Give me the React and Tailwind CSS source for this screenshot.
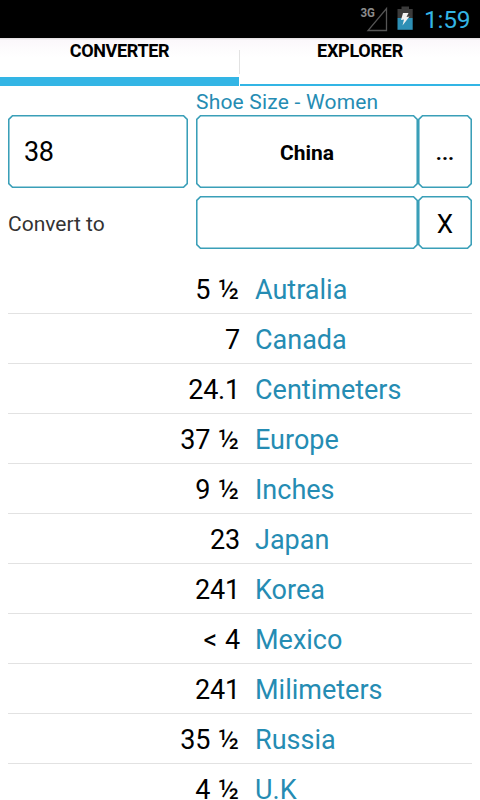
const SIZES = [
  { value: "5 ½", name: "Autralia" },
  { value: "7", name: "Canada" },
  { value: "24.1", name: "Centimeters" },
  { value: "37 ½", name: "Europe" },
  { value: "9 ½", name: "Inches" },
  { value: "23", name: "Japan" },
  { value: "241", name: "Korea" },
  { value: "< 4", name: "Mexico" },
  { value: "241", name: "Milimeters" },
  { value: "35 ½", name: "Russia" },
  { value: "4 ½", name: "U.K" },
];

// Outline with bevelled corners, drawn behind a field or button.
function Frame({ w, h }) {
  const a = 0.75;
  const c = 4.5;
  const points = `${c},${a} ${w - c},${a} ${w - a},${c} ${w - a},${h - c} ${w - c},${h - a} ${c},${h - a} ${a},${h - c} ${a},${c}`;
  return (
    <svg className="pointer-events-none absolute inset-0" width={w} height={h} aria-hidden="true">
      <polygon points={points} fill="none" stroke="#3a9fb8" strokeWidth="1.6" />
    </svg>
  );
}

function StatusBar() {
  return (
    <div className="flex h-[38px] shrink-0 items-start bg-black pl-[360px]">
      <svg width="60" height="38" viewBox="0 0 60 38" aria-hidden="true">
        <path d="M8 30.500 L26.500 30.500 L26.500 8.500 Z" fill="none" stroke="#555" strokeWidth="1.3" />
        <text x="0.5" y="17" fontSize="13" fontWeight="700" fill="#8c8c8c" fontFamily="Roboto, sans-serif" textLength="14.5" lengthAdjust="spacingAndGlyphs">3G</text>
        <path d="M41.500 6.500 H49 V9 H52.700 V18 H37.500 V9 H41.500 Z" fill="#3b3b3b" />
        <path d="M37.500 18 H52.700 V29.800 H37.500 Z" fill="#2d8fb5" />
        <path d="M43 13 L48.500 13 L46.500 17 L49.500 16.500 L42.500 25.500 L44 19.500 L41 20 Z" fill="#f2f2f2" />
      </svg>
      <span className="ml-[4px] mt-[5px] text-[24.500px] leading-[30px] tracking-[-0.200px] whitespace-nowrap text-[#33b5e5]">1:59</span>
    </div>
  );
}

function Tabs() {
  return (
    <div className="flex h-12 shrink-0 bg-linear-to-b from-[#e0dcdf] from-0% via-[#fbf8fb] via-5% to-white to-40% text-[18px] leading-[21px] font-bold">
      <button className="flex w-[239px] flex-col items-center border-b-9 border-[#33b5e5] pt-[2px]">
        <span className="tracking-[-0.350px]">CONVERTER</span>
      </button>
      <div className="mt-3 h-6 w-px bg-[#e2e2e2]" />
      <button className="flex w-[240px] flex-col items-center border-b-2 border-[#33b5e5] pt-[2px]">
        <span className="tracking-[-0.250px]">EXPLORER</span>
      </button>
    </div>
  );
}

export default function App() {
  return (
    <div className="flex h-[800px] w-[480px] flex-col overflow-hidden bg-white font-['Roboto',sans-serif] text-black">
      <StatusBar />
      <Tabs />
      <main className="flex flex-col px-2">
        <div className="h-[29px] pt-[4px] pl-[188px] text-[21px] leading-6 tracking-[0.2px] text-[#258cb3]">Shoe Size - Women</div>
        <div className="flex h-[73px]">
          <div className="relative mr-2 flex w-[180px] items-center pl-4 text-[27px]">
            <Frame w={180} h={73} />
            <span className="leading-8 tracking-[-0.400px]">38</span>
          </div>
          <button className="relative w-[222px] pt-[4px] text-[21px] font-bold">
            <Frame w={222} h={73} />
            China
          </button>
          <button className="relative w-[54px] pt-[4px] text-[21px] font-bold">
            <Frame w={54} h={73} />
            ...
          </button>
        </div>
        <div className="mt-2 flex h-[53px] items-center">
          <span className="w-[188px] pt-[4px] text-[21px] text-[#333]">Convert to</span>
          <div className="relative h-full w-[222px]">
            <Frame w={222} h={53} />
          </div>
          <button className="relative h-full w-[54px] pt-[4px] text-[26px]">
            <Frame w={54} h={53} />
            X
          </button>
        </div>
        <ul className="mt-[15px] text-[27px] leading-8">
          {SIZES.map((size) => (
            <li key={size.name} className="flex h-[50px] border-b border-[#e2e2e2] pt-[10px]">
              <span className={`w-[232px] text-right tracking-[-0.200px] [word-spacing:1.500px] ${size.value.endsWith("½") ? "pr-px" : "pr-0"}`}>{size.value}</span>
              <span className="ml-[15px] text-[#258cb3]">{size.name}</span>
            </li>
          ))}
        </ul>
      </main>
    </div>
  );
}
